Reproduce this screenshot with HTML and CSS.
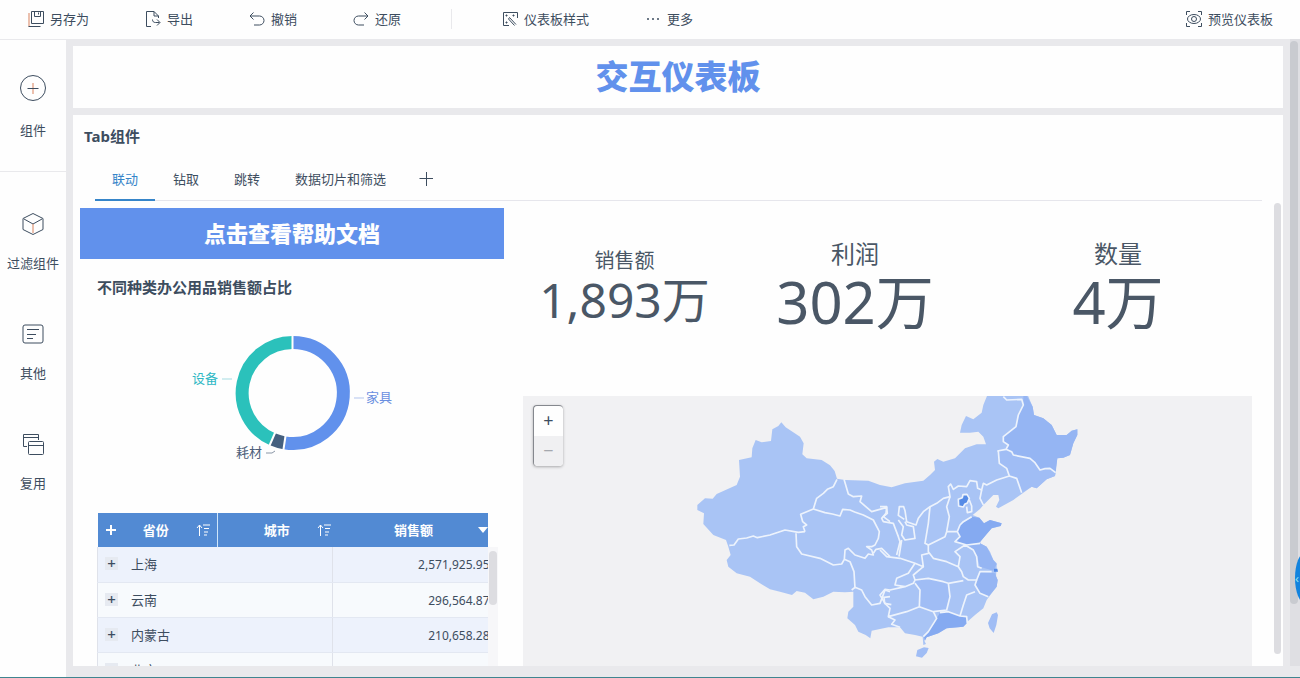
FILE: index.html
```html
<!DOCTYPE html>
<html lang="zh-CN">
<head>
  <meta charset="UTF-8">
  <meta name="viewport" content="width=device-width, initial-scale=1.0">
  <title>交互仪表板</title>
  <link rel="stylesheet" href="styles.css">
</head>
<body>

<header class="toolbar">
  <div class="tool-group">
    <button class="tool">
      <svg width="16" height="16" viewBox="0 0 16 16"><path d="M3.500.5h12v12h-12zM6.500.5v5h6v-5M10.500 1.500v2"/><path class="warm" d="M1 2v13.500"/><path d="M.5 15.500h12"/></svg>
      另存为
    </button>
    <button class="tool">
      <svg width="16" height="16" viewBox="0 0 16 16"><path d="M6 15.500H1.500V.5H9l4.500 4.500v2M9 .5V5h4.500M7.500 8.500c0 2 1 3 3 3h4M12 8.500l3 3-3 3"/></svg>
      导出
    </button>
    <button class="tool">
      <svg width="16" height="16" viewBox="0 0 16 16"><path d="M4.500 1.500L1 5l3.500 3.500M1 5h9.500a4.500 4.500 0 0 1 0 9H5"/></svg>
      撤销
    </button>
    <button class="tool">
      <svg width="16" height="16" viewBox="0 0 16 16"><path d="M11.500 1.500L15 5l-3.500 3.500M15 5H5.500a4.500 4.500 0 0 0 0 9H11"/></svg>
      还原
    </button>
  </div>
  <span class="tool-divider"></span>
  <div class="tool-group">
    <button class="tool">
      <svg width="16" height="16" viewBox="0 0 16 16"><path d="M15.500 7V1.500h-14v13H7"/><path d="M7.500 6.500l6.500 7M6.500 8l6 6.500M6.500 8l1-1.500M3.500 4.500h2M4.500 3.500v2M10.500 4.500h2M11.500 3.500v2M3.500 11.500h2M4.500 10.500v2"/></svg>
      仪表板样式
    </button>
    <button class="tool">
      <svg class="dots" width="16" height="16" viewBox="0 0 16 16"><circle cx="3" cy="8" r="1"/><circle cx="8" cy="8" r="1"/><circle cx="13" cy="8" r="1"/></svg>
      更多
    </button>
  </div>
  <button class="tool preview">
    <svg width="16" height="16" viewBox="0 0 16 16"><path d="M.5 4V.5H4M12 .5h3.500V4M15.500 12v3.500H12M4 15.500H.5V12"/><ellipse cx="8" cy="8" rx="6.500" ry="4.500"/><circle cx="8" cy="8" r="2.500"/></svg>
    预览仪表板
  </button>
</header>

<main class="main">
  <nav class="sidebar">
    <div class="side-section">
      <button class="side-item">
        <svg width="28" height="28" viewBox="0 0 28 28"><circle cx="14" cy="14" r="12.500"/><path class="warm" d="M14 9v11"/><path d="M8.500 14.500h11"/></svg>
        组件
      </button>
    </div>
    <div class="side-section side-section-list">
      <button class="side-item">
        <svg width="22" height="22" viewBox="0 0 22 22"><path d="M11 .5l10 5v11l-10 5-10-5v-11zM2 6l9 5 9-5"/><path class="warm" d="M11 11v9"/></svg>
        过滤组件
      </button>
      <button class="side-item">
        <svg width="22" height="22" viewBox="0 0 22 22"><rect x="1" y="2" width="20" height="18" rx="2"/><path d="M5 6.500h12M5 11.500h9M5 15.500h6"/></svg>
        其他
      </button>
      <button class="side-item">
        <svg width="22" height="22" viewBox="0 0 22 22"><path d="M5 13.500H1.500v-12h15V7M1.500 4.500h15"/><rect x="6.500" y="8.500" width="15" height="13" rx="1"/><path d="M6.500 12.500h15"/></svg>
        复用
      </button>
    </div>
  </nav>

  <div class="workspace">
    <section class="card banner">
      <h1>交互仪表板</h1>
    </section>

    <section class="card tab-card">
      <h2>Tab组件</h2>
      <div class="tabs" role="tablist">
        <button class="tab active" role="tab">联动</button>
        <button class="tab" role="tab">钻取</button>
        <button class="tab" role="tab">跳转</button>
        <button class="tab" role="tab">数据切片和筛选</button>
        <button class="tab-add" aria-label="添加">
          <svg width="14" height="14" viewBox="0 0 14 14"><path d="M7.500 0v14M.5 6.500h14"/></svg>
        </button>
      </div>

      <div class="board">
        <div class="left">
          <a class="help" href="#">点击查看帮助文档</a>

          <div class="ring">
            <h3>不同种类办公用品销售额占比</h3>
            <svg class="donut" viewBox="0 0 424 190">
              <g fill="none" stroke-width="13">
                <path stroke="#6191ec" d="M212.500 37.500a50.500 50.500 0 1 1-8 100.300"/>
                <path stroke="#45607f" d="M204.500 137.800a50.500 50.500 0 0 1-12-3.500"/>
                <path stroke="#2bc1bb" d="M192.500 134.300A50.500 50.500 0 0 1 212.500 37.500"/>
              </g>
              <path class="ring-gap" d="M212.500 30v15M205.800 129l-2.400 16M195.400 127l-6.500 15"/>
              <path class="lead lead-teal" d="M142 74h10"/>
              <path class="lead lead-blue" d="M274 93h10"/>
              <path class="lead lead-navy" d="M186 148h6l3-2"/>
              <text x="112" y="78" fill="#2fb8c4">设备</text>
              <text x="286" y="97" fill="#6a8fe0">家具</text>
              <text x="156" y="152" fill="#4d5f7a">耗材</text>
            </svg>
          </div>

          <div class="table-box">
            <div class="table-clip">
              <table>
                <thead>
                  <tr>
                    <th class="province">
                      <div class="head">
                        <svg width="10" height="10" viewBox="0 0 10 10"><path d="M5 0v10M0 5h10"/></svg>
                        <span>省份</span>
                        <svg class="sort" width="14" height="12" viewBox="0 0 14 12"><path d="M3.500 12V1M1 4l2.500-3L6 4M7 1h7M8 4.500h5M8 8h4M8 11h3"/></svg>
                      </div>
                    </th>
                    <th class="city">
                      <div class="head">
                        <i></i>
                        <span>城市</span>
                        <svg class="sort" width="14" height="12" viewBox="0 0 14 12"><path d="M3.500 12V1M1 4l2.500-3L6 4M7 1h7M8 4.500h5M8 8h4M8 11h3"/></svg>
                      </div>
                    </th>
                    <th class="sales">
                      <div class="head">
                        <i></i>
                        <span>销售额</span>
                        <svg width="12" height="8" viewBox="0 0 12 8"><path class="solid" d="M1 1h10L6 7z"/></svg>
                      </div>
                    </th>
                  </tr>
                </thead>
                <tbody>
                  <tr><td colspan="2"><button class="expand">+</button>上海</td><td class="num">2,571,925.95</td></tr>
                  <tr><td colspan="2"><button class="expand">+</button>云南</td><td class="num">296,564.87</td></tr>
                  <tr><td colspan="2"><button class="expand">+</button>内蒙古</td><td class="num">210,658.28</td></tr>
                  <tr><td colspan="2"><button class="expand">+</button>北京</td><td class="num"></td></tr>
                </tbody>
              </table>
            </div>
            <div class="table-track"><span class="table-thumb"></span></div>
          </div>
        </div>

        <div class="right">
          <div class="kpis">
            <div class="kpi kpi-small"><span>销售额</span><strong>1,893万</strong></div>
            <div class="kpi"><span>利润</span><strong>302万</strong></div>
            <div class="kpi"><span>数量</span><strong>4万</strong></div>
          </div>

          <div class="map">
            <svg class="china" viewBox="-501 18 2187 810" preserveAspectRatio="xMidYMin slice">
              <path class="land" d="M274 97l13 15 25 16 18 12 11 20-4 33 13 12 45 5 25 16 14 17 7 23 24 4 70 2 35 13 35 7 40-12 55-8 20-17 15-15-3-25 10-8 18 8 35-10 30-30 35-12h28l-8-23-15-15-25 3h-30l5-23 13-27 22 10 25-20 5-23 15-37h115l18 42 4 25 28 10 25 20 15 30h30l15-13 17-4v17l-12 25-10 35-20 8-18 2-5 35-2 18-25 10-30 27-15-5-25 18-30 22-45 25-7-5 10-20-3-15h-15l-20 20-10 10-10 12-22 18 20 8 14 17 18-10 35 10-3 8-27 7-13 15-17 20-5 10 20 10 10 15 10 25 10 10v15l-2 25 5 10-3 20-15 20-15 20-10 25-25 20-23 20-12 15-50 5-25 15-35 12-7 10 5 10-8 3-2-25-23-5-30-5-15-18h-35l-25 5-25 5-4 23-14-10-22-10-10-20-23-20 3-20 15-15v-45l-25 2-35-2-30 15-30 8-25-20-25-5-14 12-36-10-30-7-30-18-30-20-40-10-25-20-5-20 12-15-7-25-7-20-38-15-30-33 2-32-20-10v-15l23-20 23 1 12-14 60-27 10-25-3-50 38-8 2-27 10-25 18 7 28-4 4-35 18-10z"/>
              <!-- provinces shaded by sales -->
              <g transform="translate(570 0)">
                <path class="mid" d="M430 18h10l18 32 4 25 28 10 25 20 15 30h30l15-13 17-4v17l-12 25-10 35-20 8-18 2-5 43-17-10-30 3-30-35-50-10-5-10-17-8 7-13-15-10v-15l38-30 7-35 15-30z"/>
                <path class="soft" d="M355 183l23-5 22 17 50 10 30 35 30-5 17 13-2 10-25 10-30 27-15-5-30 18-15-43-22-7-8-23-22-15z"/>
                <path class="soft" d="M105 570l40-5 60 15 5 40-10 40-40 5-42-15 2-50z"/>
                <path class="mid" d="M260 465l40-5 20 10 20 40 10 12-10 20-40-12-8-30-12-20z"/>
                <path class="mid" d="M300 545l45 5 8 20-3 20-25 30-25-10-15-25z"/>
                <path class="high" d="M275 380l23 3 14 17 18-10 35 10-3 8-27 7-30 35-10 10-40 5-30-10 15-15-8-15 8-20z"/>
                <path class="high" d="M180 668l25-3 35 13 20 2 2 18-12 12-50 5-25 15-35 12-5 10-3-12 38-55z"/>
                <path class="soft" d="M350 667l4 8-5 30-8 24-12-14-5-16 12-26zM112 780l20-8 14 2-6 15-14 14-18-4z"/>
              </g>
              <g class="borders">
                <path d="M118 466l14-1 13-18 25-3 20-6 12 5 38-8 45-15 40 7 20-2M345 425l-5-15 10-5-12-10-6-22 38-16 10-32 20-15 12-12 18-8 11-22"/>
                <path d="M370 357l35 11 22 4 23 6 8-20 22 2 14 6 26 9 30 15 18 35-3 20-10 20-10 5h-15l15 10 5 15-15-3-10 13-30-10-20-20-10 5-2 28M318 430l2 40 15 22 55 13 40 20 25-3 8-14 17 7 12 30 3 50"/>
                <path d="M462 268l13 44 15 8 25-2-5 17 35 30 45-13 2 18-12 10 20 15M550 490l8-12 17-3 25 25M485 600l10-8 20 8 10 20 20 25 25-5 15-40 15 5M600 620l-18 2 2 18 20 4"/>
              </g>
              <g class="borders" transform="translate(570 0)">
                <path d="M370 20l10 10 45-2 5 17-15 30-7 35-38 30v15l15 10-7 13-26 5M378 178l17 7 5 10 50 10 14 12 16 23 15-4 15-1 17 13"/>
                <path d="M355 183l3 37 22 15 8 23 22 7 15 43M388 258l-38 12-30 15-10-5-5 20-12-5-3-20-20-3-10 18-25-2-15 10-8-16-7 8 5 30-20 5-20 15-20 10-20 15-15 20-7 20-28-10-5-33-4-12h-13l-3 26 18 12"/>
                <path d="M0 350h20l-2 20-13 15 5 10 30 5 15 40 5 15-10 40M75 395l5 10 20 5 5 35-30 5-10-15 5-25-15-20M65 450l-8 50M150 350l-5 50-10 60 10 5M210 320l-10 30 8 30-8 45-5 15-50 25"/>
                <path d="M275 380l-25 15-10 10-8 20h-32M232 425l8 15-15 15 35 10 40-5M305 300l-5 25 10 20M268 330l7 18v17l-13 3-2-18"/>
                <path d="M145 465v20l15 20 40 10 35 15 10 15 5 15 15 10h25l10-25 35 0M145 490l-20 5 5 35-25-10-45-15-40-5-20-20M255 465l-30 20 15 15-5 30M255 465l25 15 10 20 3 30 12 5"/>
                <path d="M130 530l-30 25 5 15 40-5 45 10 15 5 45-8M105 520l-20 30-35 15-5 20 30 5 25-10 5-10M75 590l-45 10-15-2-15 17 15 25 15 15-5 25 55-15 38-15 2-50-15-20"/>
                <path d="M118 650l42 15 40-5 10-40-5-40M25 680l20 10-10 13 25 9M160 665l10 20-25 40-15 15M180 668l25-3 35 13 20 2 2 20M240 678l10-33 10-30 25-10M290 570l-5 15 15 25 25 10"/>
                <path class="top" d="M235 328l12-5 2-9 12-1 7 12-6 14-8 4-4 8-14-3z"/>
              </g>
              <path class="top" d="M912 536h10l2 9h-12z"/>
            </svg>
            <div class="zoom">
              <button aria-label="放大">+</button>
              <button class="off" aria-label="缩小">−</button>
            </div>
          </div>
        </div>
      </div>
      <span class="inner-thumb"></span>
    </section>
  </div>

  <div class="page-track"><span class="page-thumb"></span></div>
  <button class="drawer" aria-label="展开">‹</button>
</main>

</body>
</html>
```

FILE: styles.css
```css
* {
  margin: 0;
  padding: 0;
  box-sizing: border-box;
}

body {
  height: 100vh;
  display: flex;
  flex-direction: column;
  overflow: hidden;
  background: #e9e9ec;
  border-bottom: 1px solid #3f8590;
  color: #3d4d5f;
  font-family: "Noto Sans", "Noto Sans CJK SC", sans-serif;
  font-size: 13px;
  line-height: 20px;
}

button {
  background: none;
  border: none;
  color: inherit;
  font: inherit;
  cursor: pointer;
}

svg {
  display: block;
  flex: none;
  fill: none;
  stroke: currentColor;
}

.warm {
  stroke: #d9825f;
}

/* top toolbar */
.toolbar {
  flex: none;
  height: 39px;
  display: flex;
  align-items: center;
  padding: 0 27px 2px 28px;
  background: #fefefe;
}

.tool-group {
  display: flex;
  gap: 56px;
}

.tool {
  display: flex;
  align-items: center;
  gap: 6px;
  white-space: nowrap;
}

.tool-divider {
  width: 1px;
  height: 20px;
  margin: 0 50px;
  background: #e9e9ec;
}

.dots {
  fill: currentColor;
  stroke: none;
}

.preview {
  margin-left: auto;
}

/* left menu */
.main {
  flex: 1;
  min-height: 0;
  display: flex;
  position: relative;
  overflow: hidden;
}

.sidebar {
  flex: none;
  width: 66px;
  margin-top: 1px;
  background: #fefefe;
}

.side-section {
  padding: 34px 0 31px;
  border-bottom: 1px solid #e9e9ec;
}

.side-section-list {
  display: flex;
  flex-direction: column;
  gap: 50px;
  padding-top: 41px;
  border-bottom: none;
}

.side-item {
  width: 100%;
  display: flex;
  flex-direction: column;
  align-items: center;
  gap: 18px;
  white-space: nowrap;
}

/* canvas */
.workspace {
  flex: 1;
  min-width: 0;
  display: flex;
  flex-direction: column;
  gap: 7px;
  padding: 7px 7px 11px 7px;
}

.card {
  background: #fefefe;
}

.banner {
  flex: none;
  padding: 11px 0;
  text-align: center;
}

.banner h1 {
  color: #6191ec;
  font-size: 33px;
  font-weight: 900;
  line-height: 40px;
}

.tab-card {
  flex: 1;
  min-height: 0;
  display: flex;
  flex-direction: column;
  position: relative;
  overflow: hidden;
  padding: 11px 31px 0 7px;
}

.tab-card h2 {
  padding-left: 4px;
  font-size: 15px;
  line-height: 20px;
}

.tabs {
  flex: none;
  display: flex;
  gap: 1px;
  height: 43px;
  margin: 12px -10px 7px 15px;
  border-bottom: 1px solid #e6e6ec;
}

.tab {
  height: 43px;
  padding: 0 17px;
  border-bottom: 2px solid transparent;
}

.tab.active {
  color: #3685c9;
  border-bottom-color: #3685c9;
}

.tab-add {
  padding: 0 15px;
}

.board {
  flex: 1;
  min-height: 0;
  display: grid;
  grid-template-columns: 424fr 729fr;
  gap: 19px;
}

.left,
.right {
  min-width: 0;
  min-height: 0;
  display: flex;
  flex-direction: column;
}

.help {
  flex: none;
  background: #6191ec;
  color: #fefefe;
  font-size: 22px;
  font-weight: 900;
  line-height: 51px;
  text-align: center;
  text-decoration: none;
}

.ring {
  flex: none;
}

.ring h3 {
  padding: 18px 0 8px 17px;
  font-size: 15px;
  line-height: 20px;
}

.donut {
  width: 100%;
  font-size: 13px;
}

.donut text {
  stroke: none;
}

.ring-gap {
  stroke: #fefefe;
  stroke-width: 2;
}

.lead-teal { stroke: #a5dce2; }
.lead-blue { stroke: #b3c5ee; }
.lead-navy { stroke: #8a96a6; }

/* sales table */
.table-box {
  flex: 1;
  min-height: 0;
  display: flex;
  margin: 18px 6px 0 17px;
}

.table-clip {
  flex: 1;
  min-width: 0;
  overflow: hidden;
}

table {
  width: 105%;
  table-layout: fixed;
  border-collapse: collapse;
}

.province { width: 120px; }
.city { width: 115px; }

th {
  height: 34px;
  background: #528ad3;
  color: #fefefe;
}

.province {
  border-right: 1px solid #cfe6fa;
}

.head {
  display: flex;
  align-items: center;
  justify-content: space-between;
  padding: 0 7px 0 8px;
}

.city .head {
  padding: 0 1px 0 18px;
}

.sales .head {
  padding: 0 19px 0 18px;
}

.head svg {
  stroke-width: 2;
}

.head .sort {
  stroke-width: 1;
}

.head .solid {
  fill: currentColor;
  stroke: none;
}

td {
  height: 35px;
  border-left: 1px solid #dfe2ea;
  border-bottom: 1px solid #e3e8f2;
  background: #f7fafd;
  white-space: nowrap;
}

tbody tr:nth-child(odd) td {
  background: #edf2fc;
}

.expand {
  width: 13px;
  margin: 0 13px 0 7px;
  background: #e6eaf1;
  font-size: 15px;
  font-weight: 500;
  line-height: 13px;
}

.num {
  padding: 2px 18px 0 0;
  font-size: 12px;
  text-align: right;
}

.table-track {
  width: 10px;
  margin-top: 34px;
  padding: 4px 1px;
  background: #f7f7f9;
}

.table-thumb {
  display: block;
  height: 54px;
  border-radius: 4px;
  background: #dddde1;
}

/* kpi row */
.kpis {
  flex: none;
  display: grid;
  grid-template-columns: 203fr 258fr 268fr;
  height: 188px;
  padding-bottom: 28px;
}

.kpi {
  display: flex;
  flex-direction: column;
  align-items: center;
  justify-content: center;
  color: #4a5766;
}

.kpi span {
  font-size: 24px;
  line-height: 28px;
}

.kpi strong {
  font-size: 58px;
  font-weight: 400;
  line-height: 68px;
}

.kpi-small span {
  font-size: 20px;
  line-height: 24px;
}

.kpi-small strong {
  font-size: 48px;
  line-height: 54px;
}

/* map */
.map {
  flex: 1;
  min-height: 0;
  position: relative;
  background: #f1f1f3;
}

.china {
  width: 100%;
  height: 100%;
  stroke: none;
}

.land { fill: #a9c4f5; }
.soft { fill: #a0bdf5; }
.mid { fill: #95b5f3; }
.high { fill: #85aaf1; }
.top { fill: #568be6; }

.borders {
  stroke: #edf3fc;
  stroke-width: 5;
  stroke-linejoin: round;
}

.zoom {
  position: absolute;
  top: 9px;
  left: 10px;
  width: 30px;
  border-top: 1px solid #85888e;
  border-left: 1px solid #85888e;
  border-radius: 4px;
  background: #fefefe;
  box-shadow: 0 1px 3px rgba(0, 0, 0, 0.3);
}

.zoom button {
  display: block;
  width: 29px;
  height: 30px;
  padding-bottom: 3px;
  font-size: 18px;
}

.zoom .off {
  border-radius: 0 0 4px 4px;
  background: #f0f0f2;
  color: #a5a8ae;
}

/* scroll bars and drawer handle */
.inner-thumb {
  position: absolute;
  top: 88px;
  right: 2px;
  bottom: 12px;
  width: 7px;
  border-radius: 4px;
  background: #dddde1;
}

.page-track {
  flex: none;
  width: 10px;
  margin-bottom: 11px;
  padding: 2px 2px 0 0;
  background: #dfdfe3;
}

.page-thumb {
  display: block;
  height: 90%;
  border-radius: 4px;
  background: #c9cbd0;
}

.drawer {
  position: absolute;
  right: -15px;
  bottom: 74px;
  width: 20px;
  height: 50px;
  border-radius: 50%;
  background: #1283de;
  color: #8fe0f0;
  text-align: left;
}
```
